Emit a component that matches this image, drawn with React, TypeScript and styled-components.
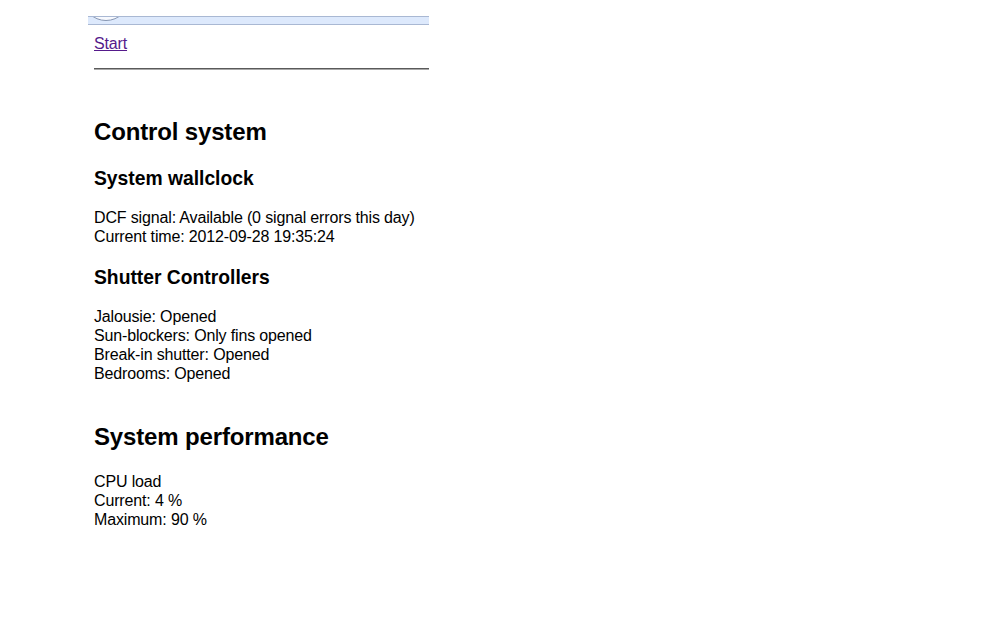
import styled, { createGlobalStyle } from "styled-components";

const GlobalStyle = createGlobalStyle`
  html, body {
    margin: 0;
    padding: 0;
    background: #ffffff;
  }
  body {
    font-family: "Liberation Sans", Arial, sans-serif;
    color: #000;
  }
`

const Page = styled.div`
  margin-left: 88px;
  width: 341px;
  padding-top: 16px;
`
const TopBar = styled.div`
  position: relative;
  overflow: hidden;
  height: 7px;
  border-top: 1px solid #a9b8d3;
  border-bottom: 1px solid #a9b8d3;
  background-color: #dde9fc;
`
const RoundButton = styled.div`
  position: absolute;
  left: -6px;
  top: -44px;
  width: 46px;
  height: 46px;
  border-radius: 50%;
  border: 1px solid #8796b2;
  background-color: #f7f9fe;
`
const Content = styled.div`
  padding: 0 0 0 6px;
`
const NavLink = styled.a`
  display: inline-block;
  margin-top: 9px;
  font-size: 16px;
  line-height: 19px;
  letter-spacing: -0.15px;
  color: #551a8b;
  text-decoration: underline;
`
const Divider = styled.hr`
  margin: 15px 0 48px 0;
  height: 0;
  border: none;
  border-top: 1px solid #5a5a5a;
  border-bottom: 1px solid #a8a8a8;
`
const Heading = styled.h2`
  margin: 40px 0 22px 0;
  font-size: 24px;
  line-height: 28px;
  letter-spacing: -0.15px;
  font-weight: bold;
`
const SubHeading = styled.h3`
  margin: 21px 0 18px 0;
  font-size: 19.3px;
  line-height: 22px;
  font-weight: bold;
`
const Lines = styled.div<{ $shift?: number }>`
  margin: ${(p) => p.$shift ?? 0}px 0 0 0;
  font-size: 16px;
  line-height: 19px;
  letter-spacing: -0.15px;
`

type Block = { title: string; lines: string[] };

const controlBlocks: Block[] = [
  {
    title: "System wallclock",
    lines: [
      "DCF signal: Available (0 signal errors this day)",
      "Current time: 2012-09-28 19:35:24",
    ],
  },
  {
    title: "Shutter Controllers",
    lines: [
      "Jalousie: Opened",
      "Sun-blockers: Only fins opened",
      "Break-in shutter: Opened",
      "Bedrooms: Opened",
    ],
  },
]

const cpuLines = ["CPU load", "Current: 4 %", "Maximum: 90 %"]

export default function App() {
  return (
    <>
      <GlobalStyle />
      <Page>
        <TopBar>
          <RoundButton />
        </TopBar>
        <Content>
          <NavLink href="#">Start</NavLink>
          <Divider />
          <Heading>Control system</Heading>
          {controlBlocks.map((block) => (
            <div key={block.title}>
              <SubHeading>{block.title}</SubHeading>
              <Lines>
                {block.lines.map((line) => (
                  <div key={line}>{line}</div>
                ))}
              </Lines>
            </div>
          ))}
          <Heading>System performance</Heading>
          <Lines $shift={-1}>
            {cpuLines.map((line) => (
              <div key={line}>{line}</div>
            ))}
          </Lines>
        </Content>
      </Page>
    </>
  )
}
